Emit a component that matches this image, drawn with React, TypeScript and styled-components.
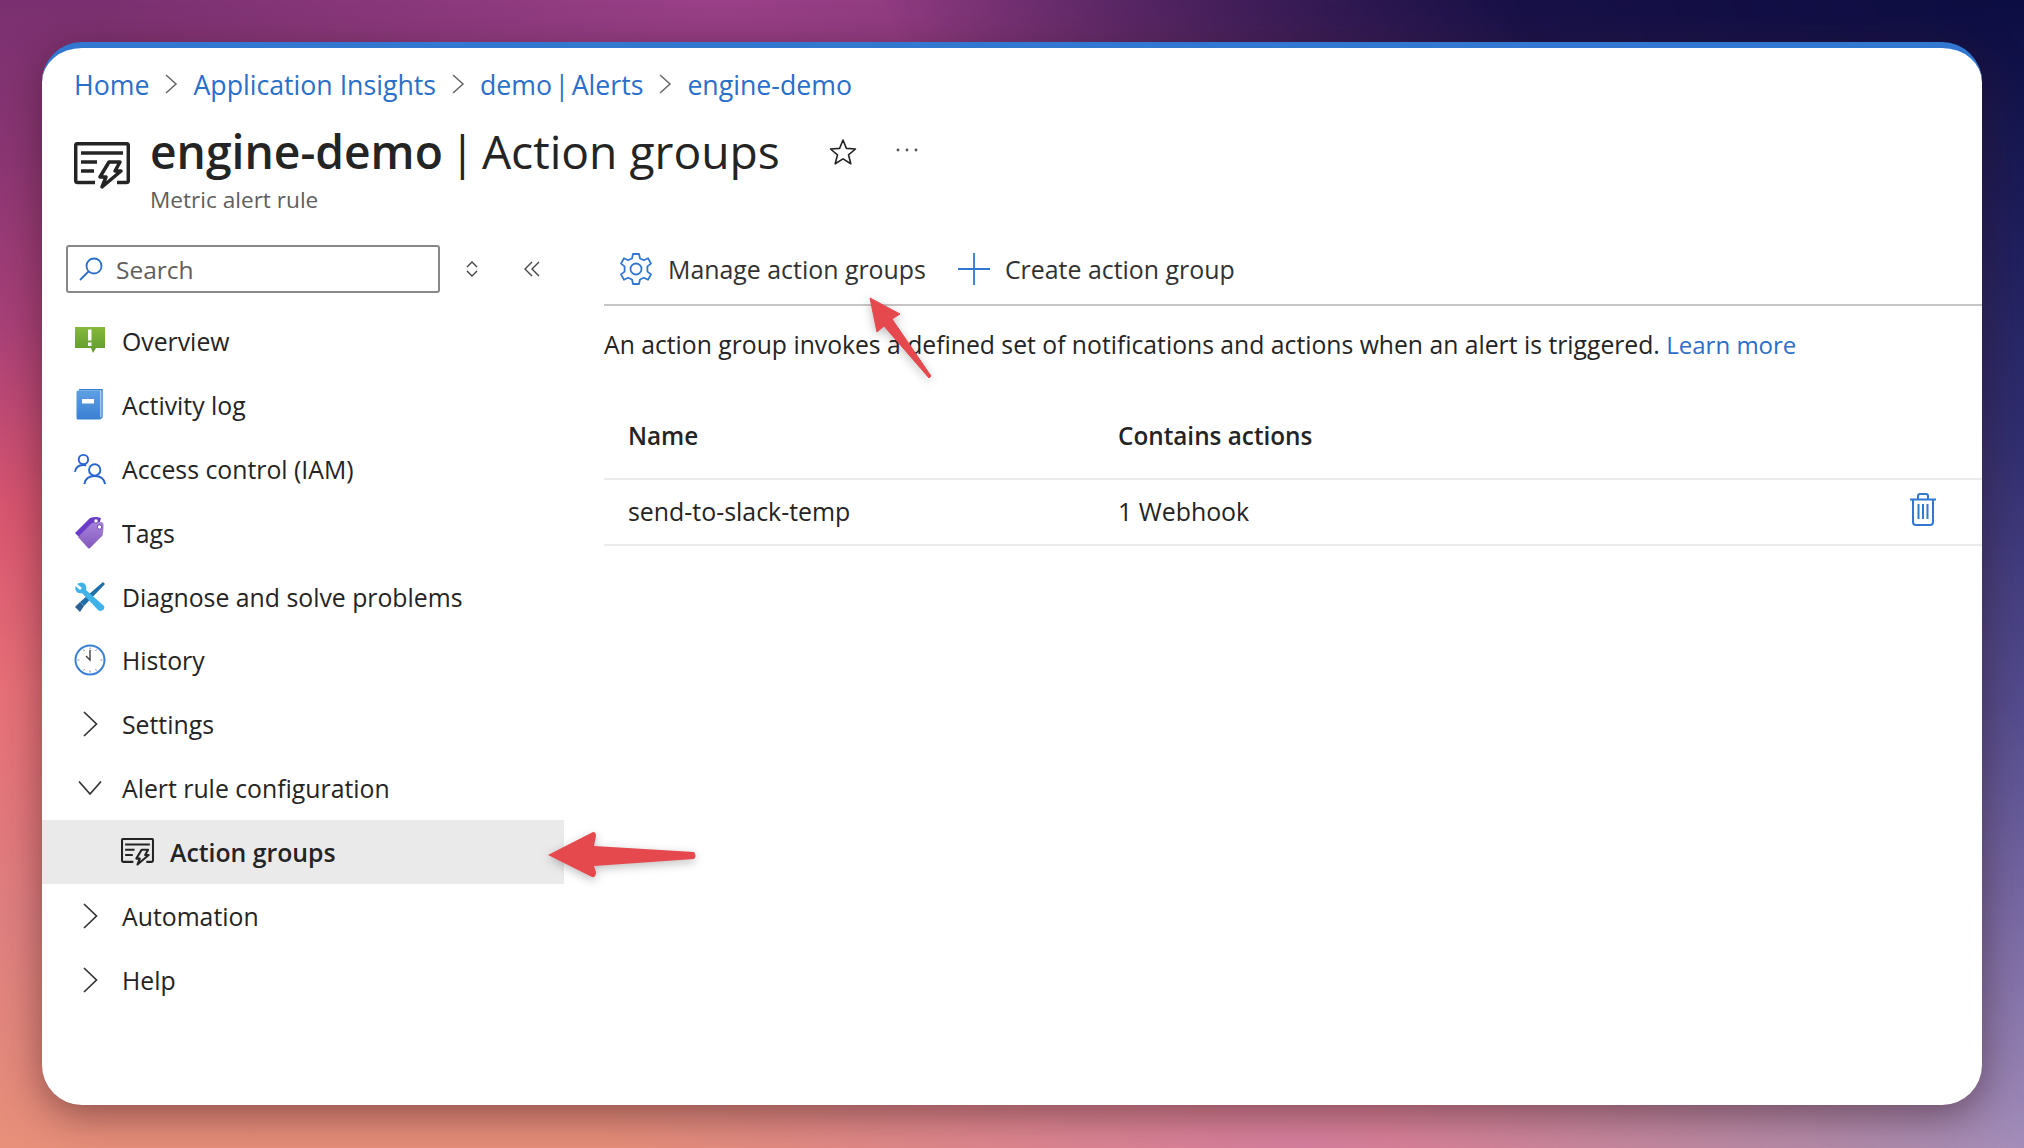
import React from "react";
import styled, { createGlobalStyle } from "styled-components";

const Global = createGlobalStyle`
  html, body { margin: 0; padding: 0; }
  body { font-family: "Open Sans", "Noto Sans", "Liberation Sans", sans-serif; color: #242424; }
`;

const Page = styled.div`
  width: 2024px;
  height: 1148px;
  box-sizing: border-box;
  padding: 42px 42px 43px 42px;
  overflow: hidden;
  position: relative;
  isolation: isolate;
  background:
    radial-gradient(ellipse 620px 260px at 720px 0%, #9a4088 0%, rgba(154,64,136,0) 100%),
    radial-gradient(ellipse 700px 200px at 1300px 100%, #d880a0 0%, rgba(216,128,160,0) 100%),
    linear-gradient(to bottom, #7a3070 0%, #8c3674 14%, #a84078 28%, #d85570 44%, #e87078 60%, #e08080 80%, #e8907a 100%);
  &::before {
    content: "";
    position: absolute;
    inset: 0;
    z-index: -1;
    background: linear-gradient(to bottom, #0c0d42 0%, #1c1e5c 20%, #2a2d70 38%, #4a4a90 62%, #7068a8 80%, #9a8cc0 100%);
    -webkit-mask-image: linear-gradient(66deg, transparent 55%, rgba(0,0,0,0.5) 68%, rgba(0,0,0,0.9) 80%, #000 100%);
    mask-image: linear-gradient(66deg, transparent 55%, rgba(0,0,0,0.5) 68%, rgba(0,0,0,0.9) 80%, #000 100%);
  }
`;

const Card = styled.main`
  height: 100%;
  box-sizing: border-box;
  background: #fff;
  border-top: 6px solid #3277d0;
  border-radius: 40px;
  box-shadow: 0 10px 40px rgba(50, 20, 25, 0.5);
  display: flex;
  flex-direction: column;
  overflow: hidden;
`;

const Crumbs = styled.nav`
  display: flex;
  align-items: center;
  height: 50px;
  margin-top: 11px;
  padding-left: 32px;
  font-size: 26.7px;
  color: #2a6fc9;
`;

const Crumb = styled.span<{ $tight?: boolean }>`
  word-spacing: ${(p) => (p.$tight ? "-4.5px" : "0")};
`;

const CrumbSep = styled.svg`
  width: 14px;
  height: 24px;
  margin: 0 15px;
  fill: none;
  stroke: #666;
  stroke-width: 1.5;
`;

const TitleRow = styled.header`
  display: flex;
  align-items: flex-start;
  padding-left: 32px;
  margin-top: 13px;
  height: 108px;
`;

const ResIcon = styled.span`
  display: block;
  width: 56px;
  height: 48px;
  margin-top: 20px;
  margin-right: 20px;
  flex: none;
`;

const TitleBlock = styled.div`
  display: flex;
  flex-direction: column;
`;

const TitleLine = styled.div`
  display: flex;
  align-items: center;
  height: 60px;
`;

const Title = styled.h1`
  margin: 0;
  font-size: 46.2px;
  font-weight: 400;
  line-height: 60px;
  color: #242424;
  white-space: nowrap;
  b { font-weight: 600; }
`;

const TitleBar = styled.span`
  display: inline-block;
  width: 39px;
  text-align: center;
`;

const Subtitle = styled.div`
  font-size: 22.6px;
  line-height: 32px;
  margin-top: 2px;
  color: #605e5c;
`;

const Star = styled.svg`
  width: 30px;
  height: 30px;
  margin-left: 48px;
  fill: none;
  stroke: #242424;
  stroke-width: 1.6;
`;

const Dots = styled.svg`
  width: 24px;
  height: 6px;
  margin-left: 37px;
  margin-bottom: 4px;
  fill: #555;
`;

const Body = styled.div`
  display: flex;
  flex: 1;
  min-height: 0;
  margin-top: 15px;
`;

const Side = styled.aside`
  width: 522px;
  flex: none;
  display: flex;
  flex-direction: column;
`;

const SearchRow = styled.div`
  display: flex;
  align-items: center;
  padding-left: 24px;
  height: 48px;
  margin-bottom: 16px;
`;

const SearchBox = styled.div`
  width: 374px;
  height: 48px;
  box-sizing: border-box;
  border: 2px solid #8a8886;
  border-radius: 3px;
  display: flex;
  align-items: center;
  padding-left: 10px;
  font-size: 24.5px;
  color: #605e5c;
`;

const SearchIcon = styled.svg`
  width: 26px;
  height: 26px;
  margin-right: 12px;
  fill: none;
  stroke: #2a6fc9;
  stroke-width: 1.8;
`;

const SmallCtl = styled.svg<{ $ml: number }>`
  width: 18px;
  height: 22px;
  margin-left: ${(p) => p.$ml}px;
  fill: none;
  stroke: #444;
  stroke-width: 1.4;
`;

const NavRow = styled.div<{ $active?: boolean; $child?: boolean }>`
  height: 63.9px;
  flex: none;
  display: flex;
  align-items: center;
  box-sizing: border-box;
  padding-left: ${(p) => (p.$child ? 79 : 32)}px;
  font-size: 24.8px;
  font-weight: ${(p) => (p.$active ? 600 : 400)};
  background: ${(p) => (p.$active ? "#ebeaea" : "transparent")};
  color: #242424;
`;

const NavIconSlot = styled.span<{ $child?: boolean }>`
  width: ${(p) => (p.$child ? 33 : 32)}px;
  height: 32px;
  margin-right: 16px;
  display: flex;
  align-items: center;
  justify-content: center;
  flex: none;
  svg { display: block; }
`;

const Content = styled.section`
  flex: 1;
  margin-left: 40px;
  min-width: 0;
  display: flex;
  flex-direction: column;
`;

const Toolbar = styled.div`
  height: 69px;
  box-sizing: border-box;
  border-bottom: 2px solid #c8c6c4;
  margin-top: -8px;
  display: flex;
  align-items: center;
  padding-left: 15px;
  padding-bottom: 4px;
  font-size: 24.9px;
  color: #323130;
`;

const ToolButton = styled.div<{ $mr?: number }>`
  display: flex;
  align-items: center;
  margin-right: ${(p) => p.$mr ?? 0}px;
`;

const ToolIcon = styled.svg<{ $mr: number }>`
  width: 34px;
  height: 34px;
  margin-right: ${(p) => p.$mr}px;
  fill: none;
  stroke: #3277d0;
  stroke-width: 1.8;
`;

const Intro = styled.p`
  margin: 21px 0 0 0;
  font-size: 24.73px;
  line-height: 35px;
  white-space: nowrap;
  color: #242424;
  a { color: #2a6fc9; text-decoration: none; font-size: 24px; }
`;

const Table = styled.div`
  margin-top: 31px;
  display: flex;
  flex-direction: column;
`;

const TableRow = styled.div<{ $head?: boolean }>`
  display: grid;
  grid-template-columns: 490px 1fr 73px;
  align-items: center;
  height: ${(p) => (p.$head ? 87 : 66)}px;
  box-sizing: border-box;
  padding-left: 24px;
  padding-bottom: ${(p) => (p.$head ? 1 : 2)}px;
  border-bottom: 2px solid #edebe9;
  font-size: ${(p) => (p.$head ? 24.3 : 24.9)}px;
  font-weight: ${(p) => (p.$head ? 600 : 400)};
  color: #242424;
`;

const Trash = styled.svg`
  width: 26px;
  height: 33px;
  margin-bottom: 4px;
  margin-left: 1px;
  fill: none;
  stroke: #3277d0;
  stroke-width: 2;
`;

const Arrow = styled.svg`
  position: absolute;
  left: 0;
  top: 0;
  width: 2024px;
  height: 1148px;
  pointer-events: none;
  filter: drop-shadow(0 3px 5px rgba(0, 0, 0, 0.25));
`;

const Chevron = ({ down }: { down?: boolean }) => (
  <svg width="26" height="28" viewBox="0 0 26 28" fill="none" stroke="#333" strokeWidth="1.7">
    {down ? <path d="M2 7.5 L13 20 L24 7.5" /> : <path d="M7 2 L19.5 14 L7 26" />}
  </svg>
);

const ActionIcon = ({ size }: { size: number }) => (
  <svg width={size} height={size * 0.857} viewBox="0 0 56 48" fill="none" stroke="#242424" strokeWidth="3.5">
    <path d="M21 40.5 H3.5 Q1.7 40.5 1.7 38.5 V3.5 Q1.7 1.7 3.5 1.7 H52.5 Q54.3 1.7 54.3 3.5 V38.5 Q54.3 40.5 52.5 40.5 H43" />
    <path d="M7 11 H49 M7 20 H23 M7 29 H20" />
    <path d="M35 20 H46 L41 29 H47 L28 45 L32 35 H26 Z" strokeLinejoin="round" />
  </svg>
);

const Gear = () => (
  <ToolIcon $mr={15} viewBox="0 0 34 34">
    <circle cx="17" cy="17" r="5.5" />
    <path d="M14 2 H20 L21 6.5 L24.8 8.3 L29 6.3 L32 11.6 L28.4 14.4 V19.6 L32 22.4 L29 27.7 L24.8 25.7 L21 27.5 L20 32 H14 L13 27.5 L9.2 25.7 L5 27.7 L2 22.4 L5.6 19.6 V14.4 L2 11.6 L5 6.3 L9.2 8.3 L13 6.5 Z" strokeLinejoin="round" />
  </ToolIcon>
);

const OverviewIcon = () => (
  <svg width="32" height="27" viewBox="0 0 32 27">
    <defs><linearGradient id="ov" x1="0" y1="0" x2="0" y2="1"><stop offset="0" stopColor="#86b83c" /><stop offset="1" stopColor="#5e9a2c" /></linearGradient></defs>
    <path d="M1 0 H31 V21 H22 L19 26 L17 21 H1 Z" fill="url(#ov)" />
    <rect x="14" y="2.5" width="3.5" height="11" fill="#fff" />
    <rect x="14" y="15.5" width="3.5" height="3.5" fill="#fff" />
  </svg>
);

const BookIcon = () => (
  <svg width="28" height="31" viewBox="0 0 28 31">
    <defs><linearGradient id="bk" x1="0" y1="0" x2="0" y2="1"><stop offset="0" stopColor="#5ea0e4" /><stop offset="1" stopColor="#3a80d2" /></linearGradient></defs>
    <path d="M3 0.7 H26 V28 L24 30" fill="none" stroke="#3a80d2" strokeWidth="1.4" />
    <rect x="0.5" y="1.5" width="24" height="29" rx="1.5" fill="url(#bk)" />
    <rect x="6" y="10" width="12" height="4.5" fill="#fff" />
  </svg>
);

const PeopleIcon = () => (
  <svg width="34" height="34" viewBox="0 0 34 34" fill="none" stroke="#2563d0" strokeWidth="2">
    <circle cx="10" cy="7" r="5" />
    <path d="M1 20 C2 14 7 12 13 13" />
    <circle cx="22" cy="18" r="6" />
    <path d="M11 33 C12 27 16 24.5 22 24.5 C28 24.5 32 27 33 33" />
  </svg>
);

const TagIcon = () => (
  <svg width="30" height="32" viewBox="0 0 30 32">
    <defs><linearGradient id="tg" x1="0" y1="0" x2="0" y2="1"><stop offset="0" stopColor="#a884dc" /><stop offset="1" stopColor="#8258bc" /></linearGradient></defs>
    <path d="M0 16 L15 1 Q17 0 22 0 L26 1 L24 8 L6 22 Z" fill="#6a3cc8" />
    <path d="M3 20 L14 9 Q16 6 20 5 L27 5 Q29 6 28.5 10 L28 16 Q28 19 26 20 L15 31 Q14 32 13 31 Z" fill="url(#tg)" />
    <circle cx="21" cy="4" r="2.2" fill="#fff" stroke="#5a30a8" strokeWidth="0.8" />
    <circle cx="24.5" cy="10" r="2.2" fill="#fff" stroke="#5a30a8" strokeWidth="0.8" />
  </svg>
);

const ToolsIcon = () => (
  <svg width="30" height="30" viewBox="0 0 30 30">
    <path d="M28 0 L30 2 L9 24 L5 20 Z" fill="#1f6fa8" />
    <path d="M9 24 L5 30 L0 25 L5 20 Z" fill="#2c5f92" />
    <path d="M2 2 Q7 -1 10 2 Q12 5 11 8 L29 24 Q30 27 28 28 Q25 30 23 28 L7 11 Q3 12 1 9 Q0 7 0.5 4 L5 8 L7 6 Z" fill="#3fb2e8" />
  </svg>
);

const ClockIcon = () => (
  <svg width="32" height="32" viewBox="0 0 32 32" fill="none">
    <circle cx="16" cy="16" r="14.5" fill="#fff" stroke="#3a80d8" strokeWidth="2" />
    <path d="M16 6 V16 L12 12" stroke="#444" strokeWidth="1.4" />
    <path d="M16 3.5 V5.5 M16 26.5 V28.5 M3.5 16 H5.5 M26.5 16 H28.5 M9.5 5.5 L10.5 7 M22.5 5.5 L21.5 7 M9.5 26.5 L10.5 25 M22.5 26.5 L21.5 25" stroke="#888" strokeWidth="1" />
  </svg>
);

const navItems: { label: string; icon: React.ReactNode }[] = [
  { label: "Overview", icon: <OverviewIcon /> },
  { label: "Activity log", icon: <BookIcon /> },
  { label: "Access control (IAM)", icon: <PeopleIcon /> },
  { label: "Tags", icon: <TagIcon /> },
  { label: "Diagnose and solve problems", icon: <ToolsIcon /> },
  { label: "History", icon: <ClockIcon /> },
  { label: "Settings", icon: <Chevron /> },
  { label: "Alert rule configuration", icon: <Chevron down /> },
];

const crumbs = ["Home", "Application Insights", "demo | Alerts", "engine-demo"];

export default function App() {
  return (
    <Page>
      <Global />
      <Card>
        <Crumbs>
          {crumbs.map((c, i) => (
            <React.Fragment key={c}>
              {i > 0 && (
                <CrumbSep viewBox="0 0 14 24"><path d="M2 3 L12 12 L2 21" /></CrumbSep>
              )}
              <Crumb $tight={c.includes("|")}>{c}</Crumb>
            </React.Fragment>
          ))}
        </Crumbs>
        <TitleRow>
          <ResIcon><ActionIcon size={56} /></ResIcon>
          <TitleBlock>
            <TitleLine>
              <Title><b>engine-demo</b><TitleBar>|</TitleBar>Action groups</Title>
              <Star viewBox="0 0 30 30"><path d="M15 3 L18.4 11.4 L27.5 12 L20.5 17.8 L22.8 26.8 L15 21.9 L7.2 26.8 L9.5 17.8 L2.5 12 L11.6 11.4 Z" strokeLinejoin="round" /></Star>
              <Dots viewBox="0 0 24 6"><circle cx="3" cy="3" r="1.4" /><circle cx="12" cy="3" r="1.4" /><circle cx="21" cy="3" r="1.4" /></Dots>
            </TitleLine>
            <Subtitle>Metric alert rule</Subtitle>
          </TitleBlock>
        </TitleRow>
        <Body>
          <Side>
            <SearchRow>
              <SearchBox>
                <SearchIcon viewBox="0 0 26 26"><circle cx="16" cy="10" r="7.5" /><path d="M10.5 15.5 L2 24" /></SearchIcon>
                Search
              </SearchBox>
              <SmallCtl $ml={23} viewBox="0 0 18 22"><path d="M4 9 L9 4 L14 9 M4 13 L9 18 L14 13" /></SmallCtl>
              <SmallCtl $ml={42} viewBox="0 0 18 22"><path d="M9 4 L2 11 L9 18 M16 4 L9 11 L16 18" /></SmallCtl>
            </SearchRow>
            {navItems.map((n) => (
              <NavRow key={n.label}>
                <NavIconSlot>{n.icon}</NavIconSlot>
                {n.label}
              </NavRow>
            ))}
            <NavRow $active $child>
              <NavIconSlot $child><ActionIcon size={33} /></NavIconSlot>
              Action groups
            </NavRow>
            <NavRow>
              <NavIconSlot><Chevron /></NavIconSlot>
              Automation
            </NavRow>
            <NavRow>
              <NavIconSlot><Chevron /></NavIconSlot>
              Help
            </NavRow>
          </Side>
          <Content>
            <Toolbar>
              <ToolButton $mr={31}>
                <Gear />
                Manage action groups
              </ToolButton>
              <ToolButton>
                <ToolIcon $mr={14} viewBox="0 0 34 34"><path d="M17 1 V33 M1 17 H33" /></ToolIcon>
                Create action group
              </ToolButton>
            </Toolbar>
            <Intro>
              An action group invokes a defined set of notifications and actions when an alert is triggered. <a href="#">Learn more</a>
            </Intro>
            <Table>
              <TableRow $head>
                <span>Name</span>
                <span>Contains actions</span>
                <span />
              </TableRow>
              <TableRow>
                <span>send-to-slack-temp</span>
                <span>1 Webhook</span>
                <Trash viewBox="0 0 26 33">
                  <path d="M0 6.5 H26 M3 6.5 V29 Q3 32 6 32 H20 Q23 32 23 29 V6.5 M8 6.5 V3 Q8 1 10 1 H16 Q18 1 18 3 V6.5 M8.5 11 V26 M13 11 V26 M17.5 11 V26" />
                </Trash>
              </TableRow>
            </Table>
          </Content>
        </Body>
      </Card>
      <Arrow viewBox="0 0 2024 1148">
        <path d="M548 855 L593 832 Q596 832 596 836 L594 846 L694 852 Q697 856 694 859 L594 866 L596 872 Q596 878 592 877 Z" fill="#e5484d" strokeLinejoin="round" />
        <path d="M870 298 L900 314 L892 319 L931 376 L929 378 L884 326 L877 332 Z" fill="#e5484d" stroke="#e5484d" strokeWidth="1" strokeLinejoin="round" />
      </Arrow>
    </Page>
  );
}
